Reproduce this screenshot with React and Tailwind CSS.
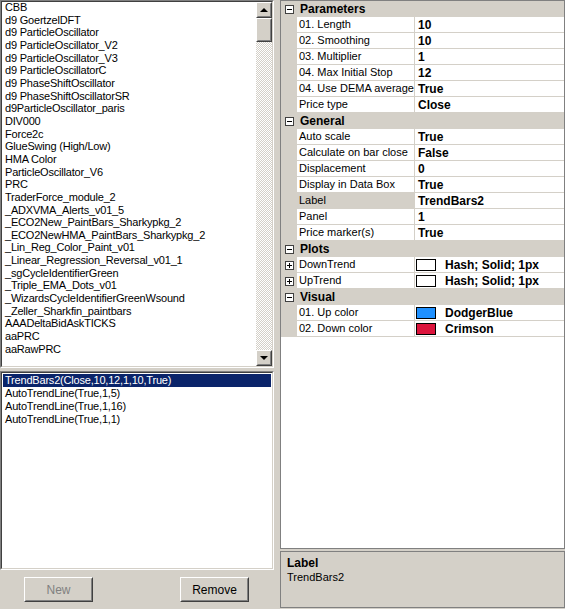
import React from 'react';

const indicators = [
    'CBB', 'd9 GoertzelDFT', 'd9 ParticleOscillator', 'd9 ParticleOscillator_V2', 'd9 ParticleOscillator_V3',
    'd9 ParticleOscillatorC', 'd9 PhaseShiftOscillator', 'd9 PhaseShiftOscillatorSR', 'd9ParticleOscillator_paris',
    'DIV000', 'Force2c', 'GlueSwing (High/Low)', 'HMA Color', 'ParticleOscillator_V6', 'PRC', 'TraderForce_module_2',
    '_ADXVMA_Alerts_v01_5', '_ECO2New_PaintBars_Sharkypkg_2', '_ECO2NewHMA_PaintBars_Sharkypkg_2',
    '_Lin_Reg_Color_Paint_v01', '_Linear_Regression_Reversal_v01_1', '_sgCycleIdentifierGreen', '_Triple_EMA_Dots_v01',
    '_WizardsCycleIdentifierGreenWsound', '_Zeller_Sharkfin_paintbars', 'AAADeltaBidAskTICKS', 'aaPRC', 'aaRawPRC',
];

const applied = ['TrendBars2(Close,10,12,1,10,True)', 'AutoTrendLine(True,1,5)', 'AutoTrendLine(True,1,16)', 'AutoTrendLine(True,1,1)'];

const grid = [
    { cat: 'Parameters' },
    { name: '01. Length', value: '10' },
    { name: '02. Smoothing', value: '10' },
    { name: '03. Multiplier', value: '1' },
    { name: '04. Max Initial Stop', value: '12' },
    { name: '04. Use DEMA average', value: 'True' },
    { name: 'Price type', value: 'Close' },
    { cat: 'General' },
    { name: 'Auto scale', value: 'True' },
    { name: 'Calculate on bar close', value: 'False' },
    { name: 'Displacement', value: '0' },
    { name: 'Display in Data Box', value: 'True' },
    { name: 'Label', value: 'TrendBars2', selected: true },
    { name: 'Panel', value: '1' },
    { name: 'Price marker(s)', value: 'True' },
    { cat: 'Plots' },
    { name: 'DownTrend', value: 'Hash; Solid; 1px', swatch: '#ffffff', plus: true },
    { name: 'UpTrend', value: 'Hash; Solid; 1px', swatch: '#ffffff', plus: true },
    { cat: 'Visual' },
    { name: '01. Up color', value: 'DodgerBlue', swatch: '#1e90ff' },
    { name: '02. Down color', value: 'Crimson', swatch: '#dc143c' },
];

const Sunken = ({ className, children }) => (
    <div className={`border border-t-[#808080] border-l-[#808080] border-r-white border-b-white ${className}`}>
        <div className="h-full border border-t-[#404040] border-l-[#404040] border-r-[#d4d0c8] border-b-[#d4d0c8] bg-white overflow-hidden">
            {children}
        </div>
    </div>
);

const Raised = ({ className, children }) => (
    <div className={`border border-t-white border-l-white border-r-[#404040] border-b-[#404040] bg-[#d4d0c8] ${className}`}>
        <div className="w-full h-full border border-t-[#d4d0c8] border-l-[#d4d0c8] border-r-[#808080] border-b-[#808080] flex items-center justify-center">
            {children}
        </div>
    </div>
);

const Toggle = ({ plus }) => (
    <div className="w-[9px] h-[9px] border border-[#404040] bg-white relative">
        <div className="absolute left-[1px] top-[3px] w-[5px] h-px bg-black" />
        {plus && <div className="absolute left-[3px] top-[1px] w-px h-[5px] bg-black" />}
    </div>
);

const App = () => {
    return (
        <div className="w-[565px] h-[609px] bg-[#d4d0c8] flex text-[11px] text-black overflow-hidden" style={{ fontFamily: '"Liberation Sans", Arial, sans-serif' }}>
            <div className="w-[274px] flex flex-col">
                <Sunken className="h-[368px]">
                    <div className="flex h-full">
                        <div className="flex-1 -mt-px">
                            {indicators.map((it) => (
                                <div key={it} className="h-[12.67px] leading-[13px] pl-[3px] whitespace-nowrap tracking-[-0.2px]">{it}</div>
                            ))}
                        </div>
                        <div className="w-4 flex flex-col bg-[repeating-conic-gradient(#d4d0c8_0_25%,#ffffff_0_50%)] bg-[length:2px_2px]">
                            <Raised className="h-4 w-4">
                                <div className="w-0 h-0 border-l-[4px] border-r-[4px] border-b-[4px] border-l-transparent border-r-transparent border-b-black" />
                            </Raised>
                            <Raised className="h-[24px] w-4" />
                            <div className="flex-1" />
                            <Raised className="h-4 w-4">
                                <div className="w-0 h-0 border-l-[4px] border-r-[4px] border-t-[4px] border-l-transparent border-r-transparent border-t-black" />
                            </Raised>
                        </div>
                    </div>
                </Sunken>
                <Sunken className="mt-[3px] h-[199px]">
                    <div className="pt-px px-px">
                        {applied.map((a, i) => (
                            <div key={a} className={`h-[13px] leading-[13px] pl-[2px] whitespace-nowrap tracking-[-0.2px] ${i === 0 ? 'bg-[#0a246a] text-white' : ''}`}>{a}</div>
                        ))}
                    </div>
                </Sunken>
                <div className="flex pt-[7px] pl-[24px]">
                    <Raised className="w-[69px] h-[25px]">
                        <span className="text-[#808080] text-[12px]">New</span>
                    </Raised>
                    <Raised className="ml-[87px] w-[69px] h-[25px]">
                        <span className="text-[12px]">Remove</span>
                    </Raised>
                </div>
            </div>
            <div className="ml-[6px] flex-1 flex flex-col">
                <div className="h-[549px] border border-[#808080] bg-white">
                    {grid.map((r, i) =>
                        r.cat ? (
                            <div key={i} className="h-4 bg-[#d4d0c8] flex items-center">
                                <div className="w-4 flex justify-center pl-px"><Toggle /></div>
                                <span className="font-bold ml-[3px] text-[12px]">{r.cat}</span>
                            </div>
                        ) : (
                            <div key={i} className="h-4 flex">
                                <div className="w-4 bg-[#d4d0c8] flex items-center justify-center pl-px">{r.plus && <Toggle plus />}</div>
                                <div className={`w-[118px] border-b border-[#d4d0c8] border-r flex items-center pl-[2px] whitespace-nowrap ${r.selected ? 'bg-[#d4d0c8]' : ''}`}>{r.name}</div>
                                <div className="flex-1 border-b border-[#d4d0c8] flex items-center pl-px font-bold text-[12px] whitespace-nowrap">
                                    {r.swatch && <div className="w-[20px] h-[12px] border border-black mr-[9px]" style={{ backgroundColor: r.swatch }} />}
                                    <span className={r.swatch ? '' : 'pl-[2px]'}>{r.value}</span>
                                </div>
                            </div>
                        )
                    )}
                </div>
                <div className="mt-[2px] h-[57px] border border-[#808080] px-[6px] pt-[4px]">
                    <div className="font-bold text-[12px] leading-[14px]">Label</div>
                    <div className="leading-[14px]">TrendBars2</div>
                </div>
            </div>
        </div>
    );
};

export default App;
